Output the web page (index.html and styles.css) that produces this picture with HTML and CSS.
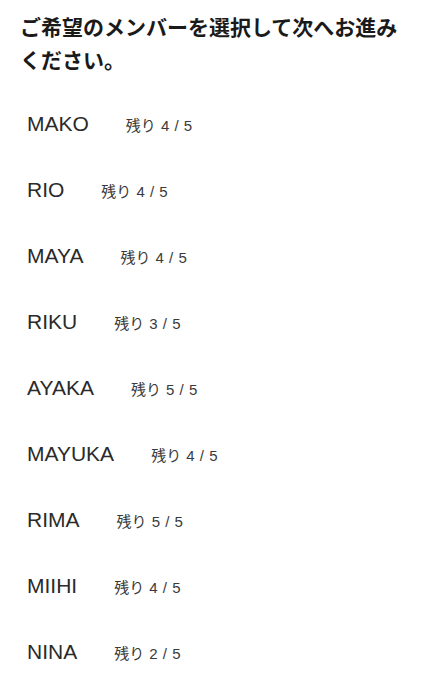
FILE: index.html
```html
<!DOCTYPE html>
<html lang="ja">
  <head>
    <meta charset="UTF-8" />
    <meta name="viewport" content="width=device-width, initial-scale=1.0" />
    <title>メンバー選択</title>
    <link rel="stylesheet" href="styles.css">
  </head>
  <body>
    <div class="container">
      <h1 class="title">ご希望のメンバーを選択して次へお進みください。</h1>
      <ul class="member-list">
        <li class="member"><span class="member-name">MAKO</span><span class="member-rest">残り 4 / 5</span></li>
        <li class="member"><span class="member-name">RIO</span><span class="member-rest">残り 4 / 5</span></li>
        <li class="member"><span class="member-name">MAYA</span><span class="member-rest">残り 4 / 5</span></li>
        <li class="member"><span class="member-name">RIKU</span><span class="member-rest">残り 3 / 5</span></li>
        <li class="member"><span class="member-name">AYAKA</span><span class="member-rest">残り 5 / 5</span></li>
        <li class="member"><span class="member-name">MAYUKA</span><span class="member-rest">残り 4 / 5</span></li>
        <li class="member"><span class="member-name">RIMA</span><span class="member-rest">残り 5 / 5</span></li>
        <li class="member"><span class="member-name">MIIHI</span><span class="member-rest">残り 4 / 5</span></li>
        <li class="member"><span class="member-name">NINA</span><span class="member-rest">残り 2 / 5</span></li>
      </ul>
    </div>
  </body>
</html>
```

FILE: styles.css
```css
/* styles.css */
body {
  font-family: "Liberation Sans", "Noto Sans CJK JP", sans-serif;
  background-color: #fff;
  color: #222;
  margin: 0;
}

.container {
  padding: 10px 20px 0 20px;
}

.title {
  font-family: "Noto Sans CJK JP", sans-serif;
  font-size: 21px;
  font-weight: bold;
  line-height: 33px;
  margin: 0;
  color: #1a1a1a;
}

.member-list {
  list-style: none;
  margin: 15px 0 0 0;
  padding: 0 0 0 7px;
}

.member {
  display: flex;
  align-items: center;
  height: 66px;
  gap: 37px;
}

.member-name {
  font-size: 21px;
  color: #2a2a2a;
}

.member-rest {
  font-size: 15px;
  color: #3a3a3a;
  word-spacing: 1px;
}
```
